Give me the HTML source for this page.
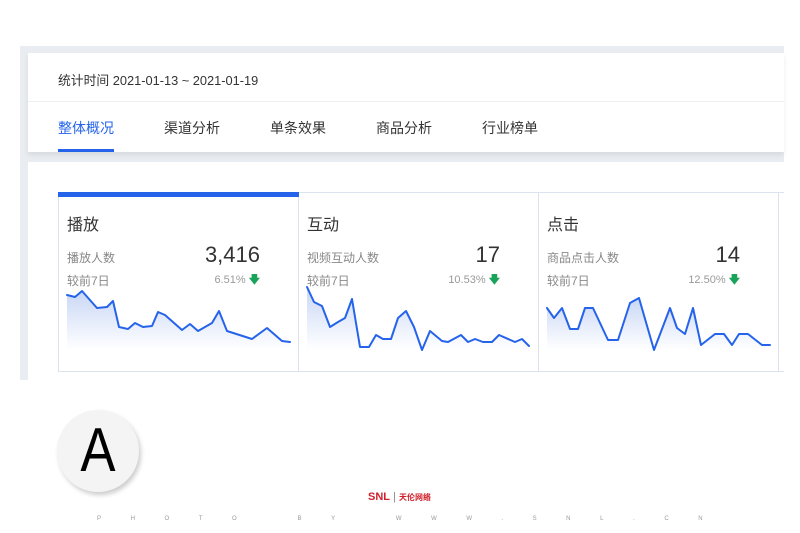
<!DOCTYPE html>
<html><head><meta charset="utf-8"><style>
*{margin:0;padding:0;box-sizing:border-box}
body{width:800px;height:533px;background:#fff;position:relative;overflow:hidden;font-family:"Liberation Sans","Noto Sans CJK SC",sans-serif}
.a{position:absolute}
.bg{left:20px;top:46px;width:764px;height:334px;background:#e9ecf0}
.c1{left:28px;top:53px;width:756px;height:99px;background:#fff;box-shadow:0 3px 5px rgba(0,0,0,.08)}
.c2{left:28px;top:162px;width:756px;height:218px;background:#fff}
.t{font-size:12.8px;color:#333;white-space:nowrap}
.tab{font-size:14px;color:#333;top:118px;white-space:nowrap}
.box{top:192px;height:180px;border:1px solid #dbe4ee;background:#fff}
.ti{font-size:16px;color:#333}
.lb{font-size:12px;color:#888;white-space:nowrap}
.num{font-size:22px;color:#333;text-align:right;width:80px}
.pc{font-size:11px;color:#999;white-space:nowrap;text-align:right;width:80px}
.ar{color:#1aa35a;font-weight:bold}
</style></head><body>
<div class="a bg"></div>
<div class="a c1"></div>
<div class="a" style="left:28px;top:101px;width:756px;height:1px;background:#edf0f3"></div>
<div class="a t" style="left:58px;top:70px">统计时间 2021-01-13 ~ 2021-01-19</div>
<div class="a tab" style="left:58px;color:#2563eb">整体概况</div>
<div class="a" style="left:58px;top:149px;width:56px;height:3px;background:#2563eb"></div>
<div class="a tab" style="left:164px">渠道分析</div>
<div class="a tab" style="left:270px">单条效果</div>
<div class="a tab" style="left:376px">商品分析</div>
<div class="a tab" style="left:482px">行业榜单</div>
<div class="a c2"></div>
<div class="a box" style="left:58px;width:241px"></div>
<div class="a box" style="left:298px;width:241px"></div>
<div class="a box" style="left:538px;width:241px"></div>
<div class="a box" style="left:778px;width:6px;border-right:none"></div>
<div class="a" style="left:58px;top:192px;width:241px;height:5px;background:#2563eb"></div>

<div class="a ti" style="left:67px;top:211px">播放</div>
<div class="a lb" style="left:67px;top:249px">播放人数</div>
<div class="a lb" style="left:67px;top:272px">较前7日</div>
<div class="a num" style="left:180px;top:242px">3,416</div>
<div class="a pc" style="left:180px;top:271px">6.51% <span class="ar">🡇</span></div>

<div class="a ti" style="left:307px;top:211px">互动</div>
<div class="a lb" style="left:307px;top:249px">视频互动人数</div>
<div class="a lb" style="left:307px;top:272px">较前7日</div>
<div class="a num" style="left:420px;top:242px">17</div>
<div class="a pc" style="left:420px;top:271px">10.53% <span class="ar">🡇</span></div>

<div class="a ti" style="left:547px;top:211px">点击</div>
<div class="a lb" style="left:547px;top:249px">商品点击人数</div>
<div class="a lb" style="left:547px;top:272px">较前7日</div>
<div class="a num" style="left:660px;top:242px">14</div>
<div class="a pc" style="left:660px;top:271px">12.50% <span class="ar">🡇</span></div>

<svg class="a" style="left:0;top:0" width="800" height="533">
<defs><linearGradient id="g" x1="0" y1="0" x2="0" y2="1"><stop offset="0" stop-color="#c9d7f5"/><stop offset="1" stop-color="#fff"/></linearGradient></defs>
<g fill="url(#g)" stroke="none">
<polygon points="67,295 75,297 82,291 97,308 107,307 113,301 119,327 128,329 135,323 143,327 152,326 158,312 165,315 182,330 190,324 198,331 212,323 219,311 227,331 252,339 267,328 282,341 290,342 290,350 67,350"/>
<polygon points="307,287 314,302 322,306 330,327 338,322 345,318 352,299 360,347 369,347 376,335 383,339 391,339 398,318 406,311 414,327 422,350 430,331 442,341 448,342 461,335 468,342 475,339 483,342 492,342 499,335 515,342 522,339 529,346 529,350 307,350"/>
<polygon points="547,308 554,318 562,308 570,329 578,329 585,308 593,308 608,340 618,340 630,303 639,298 654,350 670,308 677,328 685,334 693,308 701,345 715,334 724,334 732,345 739,334 748,334 762,345 770,345 770,350 547,350"/>
</g>
<g fill="none" stroke="#2563eb" stroke-width="2" stroke-linejoin="round" stroke-linecap="round">
<polyline points="67,295 75,297 82,291 97,308 107,307 113,301 119,327 128,329 135,323 143,327 152,326 158,312 165,315 182,330 190,324 198,331 212,323 219,311 227,331 252,339 267,328 282,341 290,342"/>
<polyline points="307,287 314,302 322,306 330,327 338,322 345,318 352,299 360,347 369,347 376,335 383,339 391,339 398,318 406,311 414,327 422,350 430,331 442,341 448,342 461,335 468,342 475,339 483,342 492,342 499,335 515,342 522,339 529,346"/>
<polyline points="547,308 554,318 562,308 570,329 578,329 585,308 593,308 608,340 618,340 630,303 639,298 654,350 670,308 677,328 685,334 693,308 701,345 715,334 724,334 732,345 739,334 748,334 762,345 770,345"/>
</g>
</svg>

<div class="a" style="left:57px;top:410px;width:82px;height:82px;border-radius:50%;background:#f4f4f4;box-shadow:2px 3px 5px rgba(0,0,0,.2)"></div>
<div class="a" style="left:57px;top:410px;width:82px;text-align:center;font-size:62px;color:#000;line-height:82px;font-family:'Liberation Sans',sans-serif;font-weight:normal;transform:scaleX(0.85)">A</div>
<div class="a" style="left:368px;top:491px;font-size:11px;font-weight:bold;color:#d0202a;white-space:nowrap">SNL<span style="color:#888;font-weight:normal"> | </span><span style="font-size:8px">天伦网络</span></div>
<div class="a" style="left:97px;top:516px;font-size:6px;color:#999;letter-spacing:29.6px;white-space:nowrap">PHOTO BY WWW.SNL.CN</div>
</body></html>
